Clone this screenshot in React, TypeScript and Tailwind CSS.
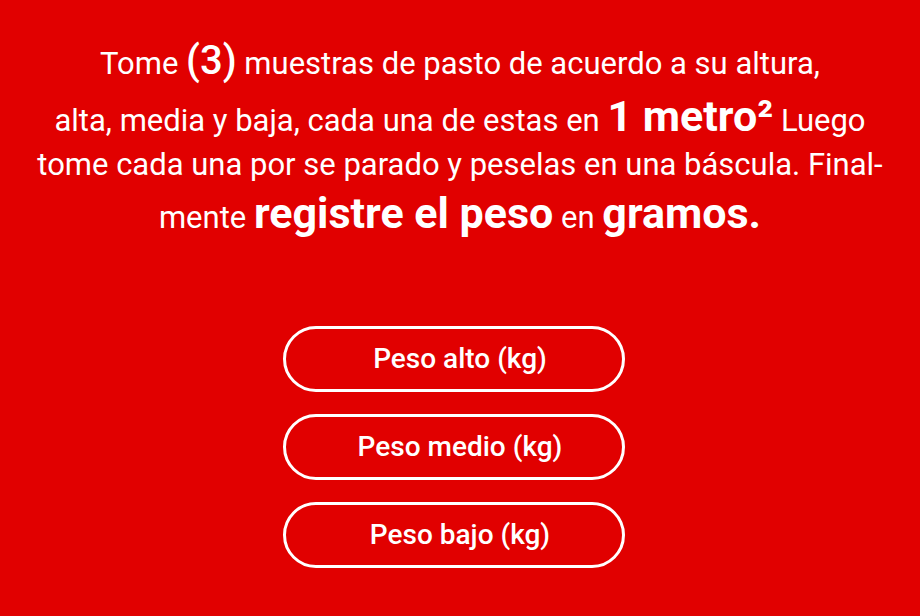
export default function App() {
  const buttons = ['Peso alto (kg)', 'Peso medio (kg)', 'Peso bajo (kg)'];
  return (
    <div
      className="w-[920px] h-[616px] bg-[#e10000] text-white flex flex-col items-center"
      style={{ fontFamily: 'Roboto, "Liberation Sans", sans-serif' }}
    >
      <p className="mt-[35px] text-center text-[31px] leading-[1.32] whitespace-nowrap">
        Tome <span className="text-[40px] font-medium">(3)</span> muestras de pasto de acuerdo a su altura,
        <br />
        alta, media y baja, cada una de estas en{' '}
        <span className="text-[43px] font-bold">1 metro²</span> Luego
        <br />
        tome cada una por se parado y peselas en una báscula. Final-
        <br />
        mente <span className="text-[43px] font-bold">registre el peso</span> en{' '}
        <span className="text-[43px] font-bold">gramos.</span>
      </p>
      <div className="mt-[84px] mr-[12px] flex flex-col gap-[22px]">
        {buttons.map((b) => (
          <button
            key={b}
            className="w-[342px] h-[66px] pl-[12px] rounded-full border-[3px] border-white text-[28px] font-medium text-white"
          >
            {b}
          </button>
        ))}
      </div>
    </div>
  );
}
